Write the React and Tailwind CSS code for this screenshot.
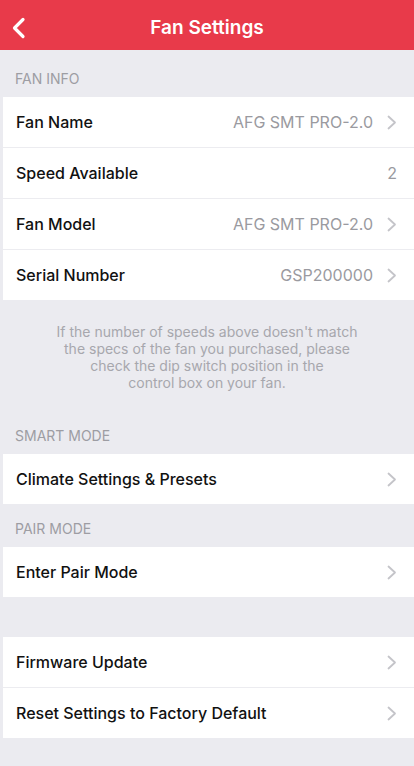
import React from 'react';

const Chevron = () => (
  <svg width="10" height="15" viewBox="0 0 10 15" fill="none" className="shrink-0">
    <path d="M1.5 1.5L8 7.5L1.5 13.5" stroke="#c4c4c9" strokeWidth="1.8" strokeLinecap="round" strokeLinejoin="round" />
  </svg>
);

const SectionLabel = ({ children, top = 'pt-[20px]' }) => (
  <div className={`${top} pb-[10px] pl-[15px] text-[14px] leading-[17px] text-[#9d9da3] uppercase`}>
    {children}
  </div>
);

const Row = ({ label, value, arrow = true, last = false }) => (
  <div className={`h-[50px] flex items-center pl-[13px] pr-[17px] box-content ${last ? '' : 'border-b border-[#ececf0]'}`}>
    <span className="flex-1 text-[16px] font-medium text-[#111]">{label}</span>
    {value && <span className={`text-[16px] text-[#9a9aa0] ${arrow ? 'mr-[14px]' : ''}`}>{value}</span>}
    {arrow && <Chevron />}
  </div>
);

const Card = ({ children }) => <div className="ml-[3px] bg-white">{children}</div>;

const App = () => {
  return (
    <div className="w-[414px] h-[766px] bg-[#ebebf0] overflow-hidden" style={{ fontFamily: 'Inter, "Noto Sans", sans-serif' }}>
      {/* Header */}
      <div className="h-[50px] bg-[#e83a4a] flex items-center pt-[6px] relative">
        <svg width="16" height="22" viewBox="0 0 16 22" fill="none" className="absolute left-[11px] top-[17px]">
          <path d="M12 2.5L3.5 11L12 19.5" stroke="#fff" strokeWidth="3.2" strokeLinecap="round" strokeLinejoin="round" />
        </svg>
        <div className="flex-1 text-center text-white text-[19px] font-semibold">Fan Settings</div>
      </div>

      <SectionLabel>Fan Info</SectionLabel>
      <Card>
        <Row label="Fan Name" value="AFG SMT PRO-2.0" />
        <Row label="Speed Available" value="2" arrow={false} />
        <Row label="Fan Model" value="AFG SMT PRO-2.0" />
        <Row label="Serial Number" value="GSP200000" last />
      </Card>

      {/* Note */}
      <div className="pt-[23px] pb-[16px] flex justify-center">
        <p className="text-center text-[14px] leading-[17px] text-[#a7a7ad]">
          If the number of speeds above doesn't match<br />
          the specs of the fan you purchased, please<br />
          check the dip switch position in the<br />
          control box on your fan.
        </p>
      </div>

      <SectionLabel>Smart Mode</SectionLabel>
      <Card>
        <Row label="Climate Settings & Presets" last />
      </Card>

      <SectionLabel top="pt-[16px]">Pair Mode</SectionLabel>
      <Card>
        <Row label="Enter Pair Mode" last />
      </Card>

      <div className="h-[40px]" />
      <Card>
        <Row label="Firmware Update" />
        <Row label="Reset Settings to Factory Default" last />
      </Card>
    </div>
  );
};

export default App;
